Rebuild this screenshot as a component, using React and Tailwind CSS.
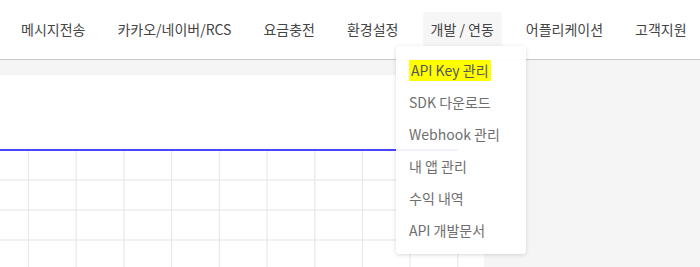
import { useState } from "react";

const menus = ["메시지전송", "카카오/네이버/RCS", "요금충전", "환경설정", "개발 / 연동", "어플리케이션", "고객지원"];
const devItems = ["API Key 관리", "SDK 다운로드", "Webhook 관리", "내 앱 관리", "수익 내역", "API 개발문서"];

const ChartGrid = () => {
  const cols = Array.from({ length: 10 }, (_, i) => 28.5 + i * 47.7);
  const rows = [105, 135, 165];
  return (
    <svg width="484" height="192" className="block">
      {rows.map((y) => (
        <line key={y} x1="0" x2="484" y1={y} y2={y} stroke="#f1f1f1" strokeWidth="2" />
      ))}
      {cols.map((x) => (
        <line key={x} x1={x} x2={x} y1="76" y2="192" stroke="#e8e8e8" strokeWidth="1.2" />
      ))}
      <line x1="0" x2="458" y1="75" y2="75" stroke="#4646ff" strokeWidth="2.2" />
    </svg>
  );
};

export default function App() {
  const [open] = useState(true);

  return (
    <div className="relative w-[700px] h-[267px] overflow-hidden bg-[#f5f5f5] font-['Noto_Sans_CJK_KR','Noto_Sans',sans-serif]">
      {/* Header */}
      <header className="h-[60px] bg-white border-b border-[#c8c8c8] flex items-center pl-[13px] gap-4">
        {menus.map((m) => (
          <div
            key={m}
            className={`h-[35px] px-2 flex items-center rounded text-[14px] text-[#444] ${
              m === "개발 / 연동" ? "bg-[#f6f6f6]" : ""
            }`}
          >
            {m}
          </div>
        ))}
      </header>

      {/* Content card */}
      <div className="mt-[15px] w-[484px] h-[192px] bg-white">
        <ChartGrid />
      </div>

      {/* Dropdown */}
      {open && (
        <div className="absolute left-[396px] top-[46px] w-[130px] py-2 rounded bg-white/[0.92] shadow-[0_1px_4px_rgba(0,0,0,0.15)]">
          {devItems.map((d, i) => (
            <div key={d} className="h-[32px] flex items-center pl-[13px] text-[14px] text-[#6e6e6e]">
              {i === 0 ? <span className="bg-[#ffff00] px-[2px] text-[#555]">{d}</span> : d}
            </div>
          ))}
        </div>
      )}
    </div>
  );
}
